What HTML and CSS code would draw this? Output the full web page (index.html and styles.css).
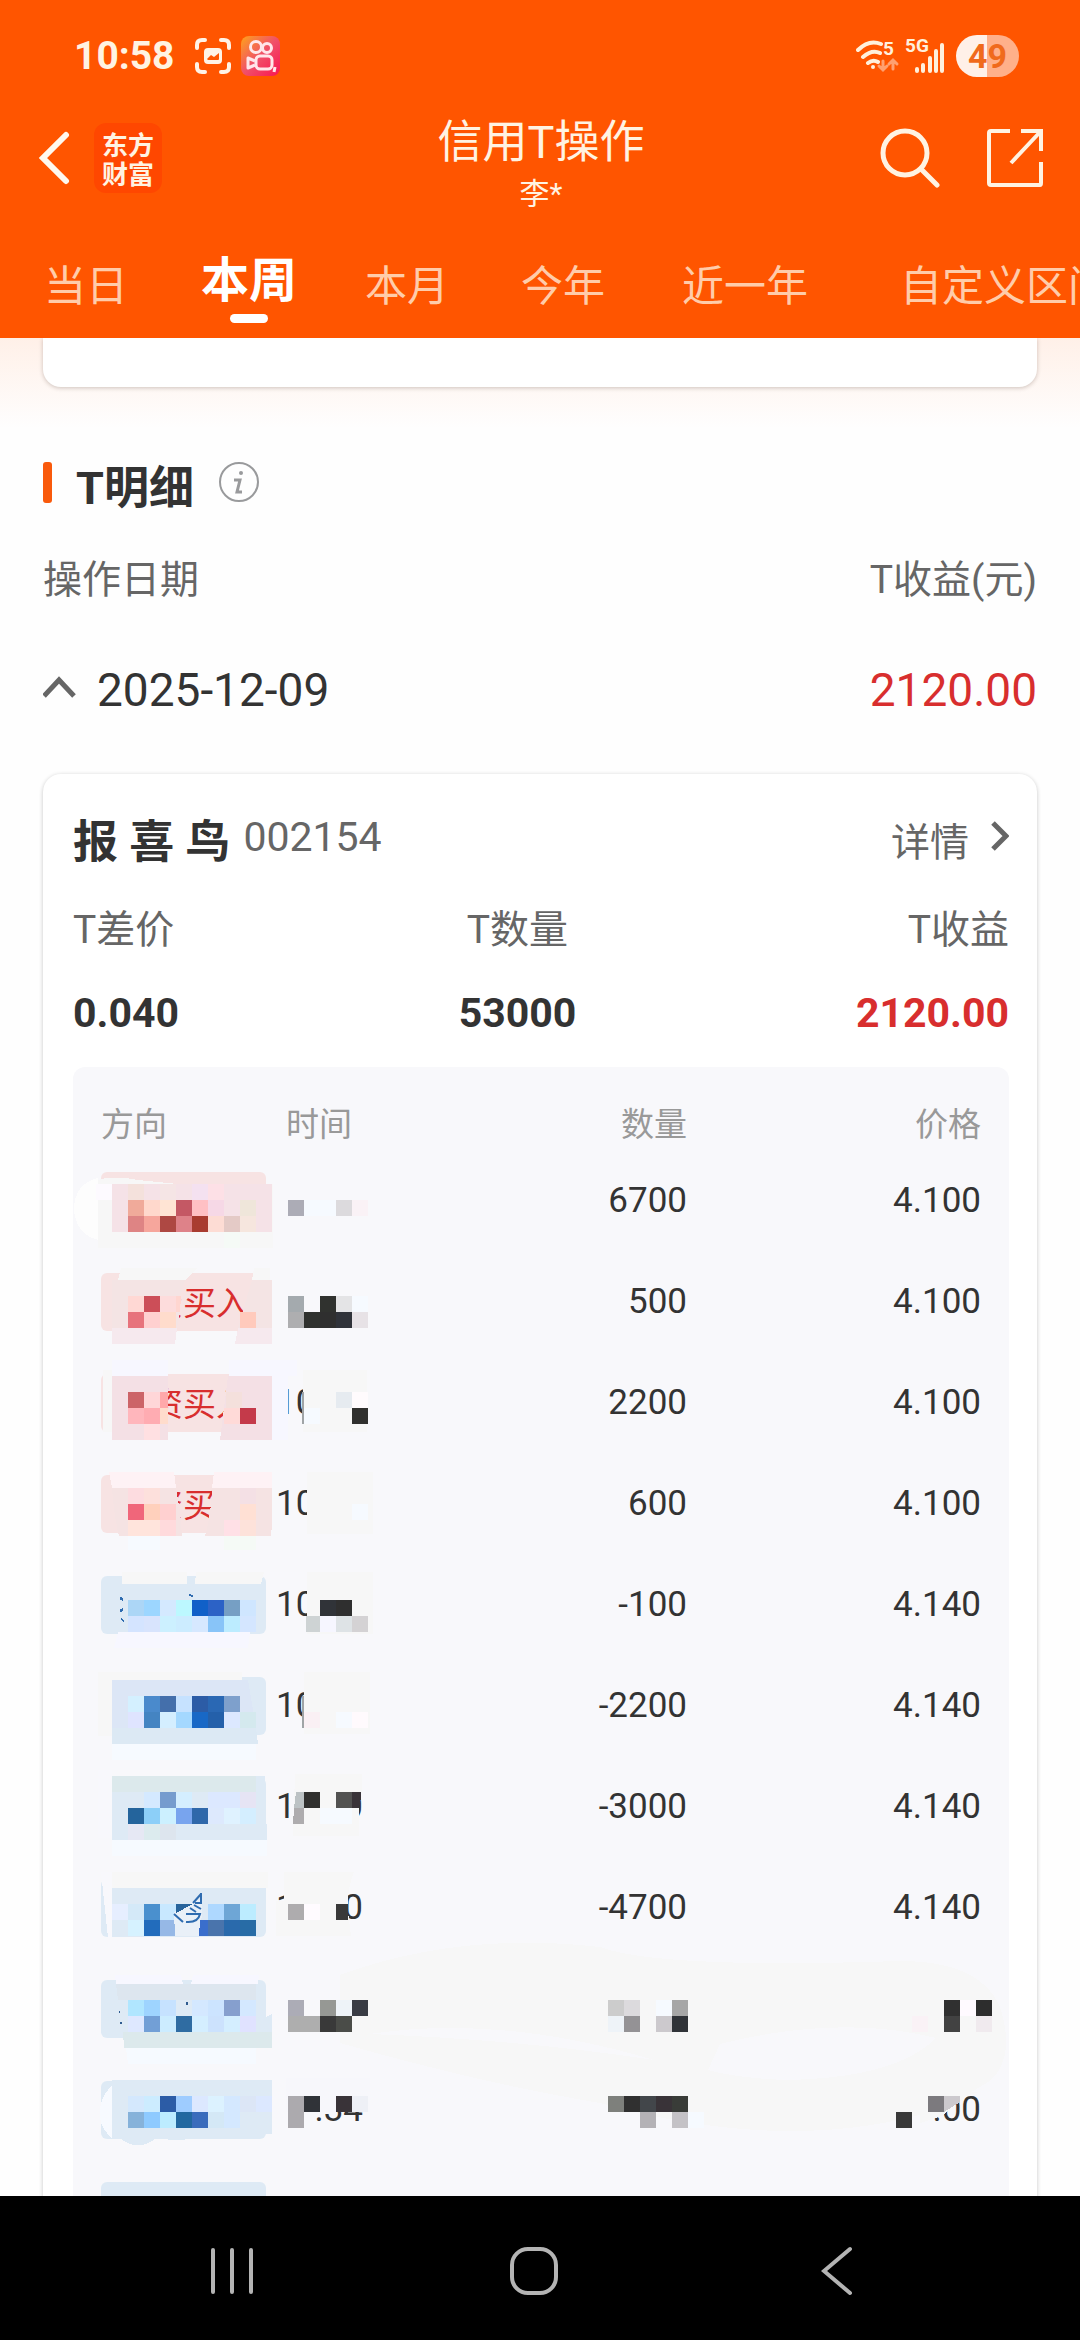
FILE: index.html
```html
<!DOCTYPE html>
<html lang="zh-CN">
<head>
<meta charset="utf-8">
<meta name="viewport" content="width=device-width, initial-scale=1">
<title>信用T操作</title>
<link rel="stylesheet" href="styles.css">
</head>
<body>
<header class="top">
  <div class="status">
    <div class="status-group">
      <span class="clock">10:58</span>
      <svg class="ico-shot" width="36" height="36" viewBox="0 0 36 36" fill="none" stroke="#fff3e6" stroke-width="4" stroke-linecap="round">
        <path d="M2 10V7q0-5 5-5h3M26 2h3q5 0 5 5v3M34 26v3q0 5-5 5h-3M10 34H7q-5 0-5-5v-3"/>
        <rect x="9" y="10" width="18" height="16" rx="4" fill="#fff3e6" stroke="none"/>
        <path d="M12 21l4-4 3 2 5-4v6q0 1-1 1H13z" fill="#ff5500" stroke="none"/>
      </svg>
      <svg width="39" height="40" viewBox="0 0 39 40" fill="none" stroke="#ffe6ea" stroke-width="3">
        <defs><linearGradient id="ks" x1="0" y1="0" x2="1" y2="1"><stop offset="0" stop-color="#ffa21a"/><stop offset=".5" stop-color="#f0506a"/><stop offset="1" stop-color="#fa1450"/></linearGradient></defs>
        <rect width="39" height="40" rx="8" fill="url(#ks)" stroke="none"/>
        <circle cx="15" cy="11" r="5.500"/><circle cx="26" cy="12" r="4.500"/>
        <rect x="15" y="20" width="16" height="13" rx="4"/>
        <path d="M14 25l-7-3v10l7-3" stroke-linejoin="round"/>
        <path d="M34 31l-1 5" stroke-width="3"/>
      </svg>
    </div>
    <div class="status-group status-right">
      <svg width="90" height="40" viewBox="856 36 90 40" fill="none" stroke="#fff0dc" stroke-width="4" stroke-linecap="round">
        <path d="M858 50q11-11 23-6M863 57q9-8 17-4M868 63q5-4 10-1" />
        <circle cx="873" cy="67" r="2" fill="#fff0dc" stroke="none"/>
        <path d="M883 61v9m-4-4l4 4 4-4M893 69v-9m-4 4l4-4 4 4" stroke="#ffa070" stroke-width="3"/>
        <path d="M917 69v2M923 65v6M930 58v13M936 51v20M942 45v26"/>
        <g class="status-label"><text x="883" y="55">5</text><text x="905" y="52">5G</text></g>
      </svg>
      <span class="battery">49</span>
    </div>
  </div>

  <div class="titlebar">
    <div class="title-side">
      <button class="icon-btn" aria-label="返回"><svg width="32" height="54" viewBox="0 0 32 54" fill="none" stroke="#fff8ee" stroke-width="6" stroke-linecap="round"><path d="M28 4L5 27l23 23"/></svg></button>
      <span class="logo">东方<br>财富</span>
    </div>
    <div class="title-text"><h1>信用T操作</h1><p>李*</p></div>
    <div class="title-side title-actions">
      <button class="icon-btn" aria-label="搜索"><svg width="60" height="60" viewBox="0 0 60 60" fill="none" stroke="#fff3e2" stroke-width="5" stroke-linecap="round"><circle cx="25" cy="25" r="22"/><path d="M42 42l15 15"/></svg></button>
      <button class="icon-btn" aria-label="分享"><svg width="58" height="60" viewBox="0 0 58 60" fill="none" stroke="#fff3e2" stroke-width="4"><path d="M24 3H5q-2 0-2 2v50q0 2 2 2h49q1 0 1-2V34M35 3h20v20M55 3L25 35"/></svg></button>
    </div>
  </div>

  <nav class="tabs">
    <button>当日</button>
    <button class="active">本周</button>
    <button>本月</button>
    <button>今年</button>
    <button>近一年</button>
    <button>自定义区间</button>
  </nav>
</header>

<main class="content">
  <div class="prev-card"></div>

  <div class="section-head">
    <span class="bar"></span>
    <h2>T明细</h2>
    <button class="icon-btn" aria-label="说明"><svg width="42" height="42" viewBox="0 0 42 42" fill="none" stroke="#999a9c" stroke-width="2"><circle cx="21" cy="21" r="19"/><circle cx="23" cy="12" r="2" fill="#999a9c" stroke="none"/><path d="M16 19h6l-3 12h5" stroke-width="3"/></svg></button>
  </div>

  <div class="line labels"><span>操作日期</span><span>T收益(元)</span></div>

  <div class="line day">
    <button class="day-toggle"><svg width="34" height="30" viewBox="0 0 34 30" fill="none" stroke="#666" stroke-width="5"><path d="M1 21L16 5l15 16"/></svg>2025-12-09</button>
    <span class="gain">2120.00</span>
  </div>

  <section class="card">
    <div class="card-head">
      <h3>报 喜 鸟</h3>
      <span class="code">002154</span>
      <a href="#detail" class="detail">详情<svg width="20" height="32" viewBox="0 0 20 32" fill="none" stroke="#666" stroke-width="5"><path d="M4 3l13 13L4 29"/></svg></a>
    </div>
    <dl class="totals">
      <div><dt>T差价</dt><dd>0.040</dd></div>
      <div class="mid"><dt>T数量</dt><dd>53000</dd></div>
      <div class="end"><dt>T收益</dt><dd class="gain">2120.00</dd></div>
    </dl>

    <div class="panel">
      <table>
        <colgroup><col class="c-side"><col class="c-time"><col><col></colgroup>
        <thead><tr><th class="side">方向</th><th class="time">时间</th><th>数量</th><th class="price">价格</th></tr></thead>
        <tbody>
          <tr><td class="side"><span class="tag buy"></span></td><td></td><td>6700</td><td class="price">4.100</td></tr>
          <tr><td class="side"><span class="tag buy">资买入</span></td><td></td><td>500</td><td class="price">4.100</td></tr>
          <tr><td class="side"><span class="tag buy">资买入</span></td><td class="time"><span>10</span></td><td>2200</td><td class="price">4.100</td></tr>
          <tr><td class="side"><span class="tag buy">资买入</span></td><td class="time"><span>10</span></td><td>600</td><td class="price">4.100</td></tr>
          <tr><td class="side"><span class="tag sell"></span></td><td class="time"><span>10</span></td><td>-100</td><td class="price">4.140</td></tr>
          <tr><td class="side"><span class="tag sell"></span></td><td class="time"><span>10</span></td><td>-2200</td><td class="price">4.140</td></tr>
          <tr><td class="side"><span class="tag sell"></span></td><td class="time"><span>1</span><span>0</span></td><td>-3000</td><td class="price">4.140</td></tr>
          <tr><td class="side"><span class="tag sell"></span></td><td class="time"><span>1</span><span>0</span></td><td>-4700</td><td class="price">4.140</td></tr>
          <tr><td class="side"><span class="tag sell"></span></td><td></td><td></td><td></td></tr>
          <tr><td class="side"><span class="tag sell"></span></td><td class="time"><span></span><span>.34</span></td><td></td><td class="price">.00</td></tr>
          <tr><td class="side"><span class="tag sell"></span></td><td></td><td></td><td></td></tr>
        </tbody>
      </table>

      <!-- privacy mosaic over quantity and price -->
      <svg class="mask mask-right" width="700" height="1129" viewBox="309 1067 700 1129" shape-rendering="crispEdges">
        <path fill="#f7f7f7" d="M340 1975q120-44 260-28 60 22 300 14 80 0 100 46 16 50-10 74l-44 26q-150 50-346-4-120-20-260-60z"/>
        <path fill="#f8f8fb" d="M370 2034q130-20 284 26-130-20-284-26zM720 2044q120-30 216-6-40 40-150 42-50-2-78-10z"/>
        <path fill="#f7f7f7" d="M920 2092h58l-12 4-24 20-22 7z"/>
        <path fill="#ccc9cd" d="M944 2096h16v6l-16 10z"/>
        <g class="px">
          <rect x="608" y="2000" fill="#cccccc"/><rect x="624" y="2000" fill="#dcdadd"/><rect x="656" y="2000" fill="#f6faff"/><rect x="672" y="2000" fill="#a6a6a6"/>
          <rect x="608" y="2016" fill="#eef3f8"/><rect x="624" y="2016" fill="#949295"/><rect x="656" y="2016" fill="#ccc9cd"/><rect x="672" y="2016" fill="#303338"/>
          <rect x="944" y="2000" fill="#303030"/><rect x="960" y="2000" fill="#fffaff"/><rect x="976" y="2000" fill="#2d2d2d"/>
          <rect x="912" y="2016" fill="#faf2f6"/><rect x="944" y="2016" fill="#424242"/><rect x="976" y="2016" fill="#f0eaee"/>
          <rect x="608" y="2096" fill="#7e807c"/><rect x="624" y="2096" fill="#303030"/><rect x="640" y="2096" fill="#42464a"/><rect x="656" y="2096" fill="#393338"/><rect x="672" y="2096" fill="#393c38"/>
          <rect x="640" y="2112" fill="#b4b2b6"/><rect x="672" y="2112" fill="#c4c2c6"/><rect x="688" y="2112" fill="#f6faff"/>
          <rect x="928" y="2096" fill="#7c7a7e"/><rect x="896" y="2112" fill="#393939"/>
        </g>
      </svg>

      <!-- privacy mosaic over direction and time -->
      <svg class="mask mask-left" width="336" height="1129" viewBox="73 1067 336 1129" shape-rendering="crispEdges">
        <!-- row 1 -->
        <path fill="#f7f7f7" d="M98 1180q14-5 40 0l40 4h95v64h-175z"/>
        <path fill="#fdfdfd" d="M98 1178q-24 6-24 32 2 24 24 30z"/>
        <path fill="#f5e2e7" d="M112 1184h160v48H112z"/>
        <path fill="#f6faff" d="M304 1200h32v16h-32z"/>
        <g class="px">
          <rect x="96" y="1184" fill="#fdfaff"/><rect x="128" y="1184" fill="#f4e1dc"/><rect x="160" y="1184" fill="#f5e5e5"/><rect x="192" y="1184" fill="#f4e1f0"/><rect x="208" y="1184" fill="#fde0e6"/>
          <rect x="128" y="1200" fill="#f0aa9a"/><rect x="144" y="1200" fill="#ffd8cc"/><rect x="160" y="1200" fill="#ffe4d4"/><rect x="176" y="1200" fill="#c45864"/><rect x="192" y="1200" fill="#ffc0c4"/><rect x="208" y="1200" fill="#f6d8e6"/><rect x="240" y="1200" fill="#efe6da"/>
          <rect x="288" y="1200" fill="#acacb6"/><rect x="336" y="1200" fill="#dcdadd"/><rect x="352" y="1200" fill="#faf2f6"/>
          <rect x="128" y="1216" fill="#de8484"/><rect x="144" y="1216" fill="#f6a69c"/><rect x="160" y="1216" fill="#ae4843"/><rect x="176" y="1216" fill="#de8289"/><rect x="192" y="1216" fill="#a93c30"/><rect x="208" y="1216" fill="#fddcd4"/><rect x="224" y="1216" fill="#e4cac6"/><rect x="240" y="1216" fill="#f6e6de"/>
          <rect x="224" y="1232" fill="#f5faf6"/>
        </g>
        <!-- row 2 -->
        <path fill="#f7f7f7" d="M121 1268h76l-11 12h-68zM254 1268h16v12h-18z"/>
        <path fill="#f4e4e4" d="M112 1280h74q-6 8-6 32l-3 16h-65zM252 1280h20v48h-34z"/>
        <path fill="#f6e9ee" d="M112 1328h65l-2 16h-63zM238 1328h34v16h-37z"/>
        <path fill="#ffd6d0" d="M176 1296h5l-1 16h-4z"/>
        <g class="px">
          <rect x="128" y="1296" fill="#ffd8d4"/><rect x="144" y="1296" fill="#cc4e58"/><rect x="160" y="1296" fill="#fddcdc"/>
          <rect x="128" y="1312" fill="#e7737c"/><rect x="144" y="1312" fill="#ffd0d0"/><rect x="160" y="1312" fill="#ffdccc"/><rect x="240" y="1312" fill="#ffcabc"/>
          <rect x="288" y="1296" fill="#a4aaae"/><rect x="320" y="1296" fill="#30322f"/><rect x="336" y="1296" fill="#e4e4e6"/><rect x="352" y="1296" fill="#f6faff"/>
          <rect x="288" y="1312" fill="#aeaeb0"/><rect x="304" y="1312" fill="#30322f"/><rect x="320" y="1312" fill="#2f2f2f"/><rect x="336" y="1312" fill="#30333a"/><rect x="352" y="1312" fill="#e7e2e6"/>
        </g>
        <!-- row 3 -->
        <path fill="#f7f7f7" d="M103 1370h9v62h-9z"/>
        <path fill="#f7f7ff" d="M112 1360h56v16h-56zM229 1360h68v16h-68zM272 1376h16v64h-16z"/>
        <path fill="#f4e0e5" d="M112 1376h56v64h-56zM228 1376h44v64h-52z"/>
        <path fill="#f7f7f7" d="M303 1370h64v62h-64z"/>
        <path fill="#a0a4a6" d="M302 1392h2v32h-2z"/>
        <path fill="#ffa8aa" d="M160 1392h8v16h-8z"/><path fill="#ffdccc" d="M160 1408h8v16h-8z"/>
        <g class="px">
          <rect x="128" y="1392" fill="#cc6468"/><rect x="144" y="1392" fill="#ffd6d8"/><rect x="226" y="1392" fill="#f4e0dc"/>
          <rect x="128" y="1408" fill="#ffb6bc"/><rect x="144" y="1408" fill="#ffacb2"/><rect x="224" y="1408" fill="#ffdad8"/><rect x="240" y="1408" fill="#c43a4a"/>
          <rect x="144" y="1424" fill="#ffe0e2"/>
          <rect x="336" y="1392" fill="#e6ebf0"/><rect x="352" y="1392" fill="#fffbfd"/><rect x="304" y="1408" fill="#f6faff"/><rect x="352" y="1408" fill="#30302e"/>
        </g>
        <!-- row 4 -->
        <path fill="#fef2f5" d="M109 1472h65l2 16h-64zM214 1472h58v16h-60z"/>
        <path fill="#f5e3e3" d="M112 1488h64l4 24 2 24h-63q-5-20-7-48zM212 1488h60v36l-1 12h-66q6-20 7-48z"/>
        <path fill="#f6faff" d="M128 1536h32v14h-32z"/><path fill="#f5faf6" d="M224 1536h32v14h-32z"/>
        <path fill="#f7f7f7" d="M307 1472h66v62h-66z"/>
        <g class="px">
          <rect x="128" y="1488" fill="#fddce0"/><rect x="144" y="1488" fill="#fde0dc"/><rect x="240" y="1488" fill="#f4e0e5"/>
          <rect x="128" y="1504" fill="#f0667a"/><rect x="144" y="1504" fill="#ffd0bc"/><rect x="160" y="1504" fill="#ffd0d0"/><rect x="240" y="1504" fill="#ffe0d4"/>
          <rect x="128" y="1520" fill="#ffe4dc"/><rect x="144" y="1520" fill="#ffe4dc"/><rect x="160" y="1520" fill="#ffdadc"/><rect x="224" y="1520" fill="#ffe0e6"/><rect x="240" y="1520" fill="#fde2da"/>
          <rect x="352" y="1504" fill="#f6faff"/>
        </g>
        <!-- row 5 -->
        <path fill="#f7f7f7" d="M122 1572h65v12h-65zM196 1572h68l-3 12h-66zM307 1572h66v62h-66z"/>
        <path fill="#f7f7ff" d="M118 1632h132l-2 16H114z"/>
        <path fill="#2f6cb0" d="M120 1597l3 1v3l-3-1zM120 1609l3-1v3l-3 1zM121 1618l3 2v2l-3-2zM189 1594l4 1v2l-4-1z"/>
        <g class="px">
          <rect x="128" y="1600" fill="#acd6f6"/><rect x="144" y="1600" fill="#9cd6ff"/><rect x="160" y="1600" fill="#d4e9ff"/><rect x="176" y="1600" fill="#bcf8ff"/><rect x="192" y="1600" fill="#1060c8"/><rect x="208" y="1600" fill="#2c62c6"/><rect x="224" y="1600" fill="#769fc4"/><rect x="240" y="1600" fill="#cfe6ff"/>
          <rect x="128" y="1616" fill="#d4e4ff"/><rect x="144" y="1616" fill="#d8e4fd"/><rect x="160" y="1616" fill="#ccf0ff"/><rect x="176" y="1616" fill="#ccecff"/><rect x="192" y="1616" fill="#d6e8ff"/><rect x="208" y="1616" fill="#88c4f8"/><rect x="224" y="1616" fill="#bcecff"/><rect x="240" y="1616" fill="#d4e6ff"/>
          <rect x="320" y="1600" fill="#303338"/><rect x="336" y="1600" fill="#2f2f2f"/>
          <rect x="306" y="1616" fill="#ced3d4"/><rect x="320" y="1616" fill="#f6f6ff"/><rect x="336" y="1616" fill="#dee3e6"/><rect x="352" y="1616" fill="#d4d2d4"/>
        </g>
        <!-- row 6 -->
        <path fill="#f7f7f7" d="M98 1672h144v8H112v56H98zM304 1672h66v62h-66z"/>
        <path fill="#dce6f6" d="M112 1680h136l8 48H112z"/>
        <path fill="#dce9f4" d="M112 1728h144l2 16H112z"/>
        <path fill="#f6faff" d="M112 1744h144v16H112z"/>
        <path fill="#a0a4a6" d="M302 1696h2v32h-2z"/>
        <g class="px">
          <rect x="128" y="1696" fill="#d4f0ff"/><rect x="144" y="1696" fill="#4a8acc"/><rect x="160" y="1696" fill="#446fab"/><rect x="176" y="1696" fill="#c6e2ff"/><rect x="192" y="1696" fill="#2c5ca6"/><rect x="208" y="1696" fill="#2a68b4"/><rect x="224" y="1696" fill="#7ea0cc"/>
          <rect x="128" y="1712" fill="#dfe4ff"/><rect x="144" y="1712" fill="#4484c2"/><rect x="160" y="1712" fill="#d4eeff"/><rect x="176" y="1712" fill="#a4d8ff"/><rect x="192" y="1712" fill="#1868c6"/><rect x="208" y="1712" fill="#2460aa"/><rect x="224" y="1712" fill="#dce8ff"/><rect x="240" y="1712" fill="#d4e9ee"/>
          <rect x="304" y="1712" fill="#faf0f4"/><rect x="336" y="1712" fill="#f6faff"/><rect x="352" y="1712" fill="#fffafd"/>
        </g>
        <!-- row 7 -->
        <path fill="#f8f8fc" d="M98 1770h14v68H98z"/>
        <path fill="#deeaf5" d="M112 1776h153l2 64H112z"/>
        <path fill="#dce9ec" d="M112 1776h144v16H112z"/>
        <path fill="#f6faff" d="M112 1840h155v16H112z"/>
        <path fill="#f7f7f7" d="M295 1774h67v18l-3 4v40h-66z"/>
        <path fill="#bcc2c4" d="M296 1792h8v16h-10z"/><path fill="#aeacae" d="M294 1808h10v16h-11z"/>
        <path fill="#393338" d="M352 1792h9v6l-2 10h-7z"/>
        <g class="px">
          <rect x="144" y="1792" fill="#d4e9ff"/><rect x="160" y="1792" fill="#769cce"/><rect x="176" y="1792" fill="#d4eeff"/><rect x="208" y="1792" fill="#dce8ff"/><rect x="224" y="1792" fill="#dce8ff"/><rect x="240" y="1792" fill="#e6e4f4"/>
          <rect x="128" y="1808" fill="#24649c"/><rect x="144" y="1808" fill="#8ccff8"/><rect x="160" y="1808" fill="#ccf0ff"/><rect x="176" y="1808" fill="#78a4ee"/><rect x="192" y="1808" fill="#2f68aa"/><rect x="208" y="1808" fill="#dde9fd"/><rect x="224" y="1808" fill="#dff2ff"/><rect x="240" y="1808" fill="#d4eeff"/>
          <rect x="128" y="1824" fill="#e6e8f4"/><rect x="144" y="1824" fill="#dcebee"/><rect x="160" y="1824" fill="#dde5ee"/>
          <rect x="304" y="1792" fill="#30302e"/><rect x="336" y="1792" fill="#525251"/><rect x="320" y="1808" fill="#f6faff"/><rect x="336" y="1808" fill="#f6faff"/>
        </g>
        <!-- row 8 -->
        <path fill="#f7f7f7" d="M112 1872h156v16H112zM284 1872h70q-8 20-6 40l3 24h-75v-35h8z"/>
        <path fill="#f8f8fc" d="M101 1872h11v66h-4z"/>
        <path fill="#deeaf5" d="M112 1888h154v38l-2 10H112z"/>
        <g class="px">
          <rect x="112" y="1904" fill="#e6eeff"/><rect x="128" y="1904" fill="#d4e9f8"/><rect x="144" y="1904" fill="#4a90ce"/><rect x="160" y="1904" fill="#c8e8ff"/><rect x="208" y="1904" fill="#aed8ff"/><rect x="224" y="1904" fill="#6ea6d6"/><rect x="240" y="1904" fill="#bcecff"/>
          <rect x="128" y="1920" fill="#d6f2ff"/><rect x="144" y="1920" fill="#226cbc"/><rect x="160" y="1920" fill="#96b8e6"/><rect x="208" y="1920" fill="#4a74ac"/><rect x="224" y="1920" fill="#2a6aac"/><rect x="240" y="1920" fill="#286ca6"/>
          <rect x="288" y="1904" fill="#aeacae"/><rect x="304" y="1904" fill="#fffbff"/>
        </g>
        <path fill="#e9f0f8" d="M174 1912l22-12h6l-1 36h-26z"/>
        <path fill="#28649c" d="M176 1904h17l-17 9z"/><path fill="#3a6ecc" d="M200 1920h8v16h-9z"/><path fill="#393939" d="M336 1904h12v16h-12z"/>
        <path fill="none" stroke="#2f6cb0" stroke-width="2" shape-rendering="auto" d="M201 1893v10h-6M201 1894l-8 9M190 1908l6 4M194 1905l7 4M186 1914h14q-2 9-14 8M174 1914l9 8"/>
        <!-- row 9 -->
        <path fill="#f7f7ff" d="M115 1975h66l2 9h-67zM193 1975h66l-1 9h-67z"/>
        <path fill="#dde6ef" d="M116 1984h140v16H118z"/>
        <path fill="#deeaf5" d="M260 2020l12-6v18h-16z"/>
        <path fill="#dce9ec" d="M123 2032h149v16H124z"/>
        <path fill="#f6faff" d="M126 2048h130v16H128z"/>
        <path fill="#2f5c90" d="M186 2002h2v3h-2zM119 2011h1v2h-1zM120 2022h2v2h-2z"/>
        <g class="px">
          <rect x="128" y="2000" fill="#b0e6ff"/><rect x="144" y="2000" fill="#9ed4ff"/><rect x="160" y="2000" fill="#c6e2ff"/><rect x="192" y="2000" fill="#d4e8ff"/><rect x="208" y="2000" fill="#cce4ff"/><rect x="224" y="2000" fill="#869fce"/><rect x="240" y="2000" fill="#d4e8ff"/>
          <rect x="128" y="2016" fill="#dee8ff"/><rect x="144" y="2016" fill="#729fd6"/><rect x="160" y="2016" fill="#ccecff"/><rect x="176" y="2016" fill="#2f6ca2"/><rect x="192" y="2016" fill="#d4eeff"/><rect x="208" y="2016" fill="#cce2fd"/><rect x="224" y="2016" fill="#d4eeff"/><rect x="240" y="2016" fill="#e0e2ff"/>
          <rect x="288" y="2000" fill="#acacb6"/><rect x="320" y="2000" fill="#969894"/><rect x="336" y="2000" fill="#eef3f8"/><rect x="352" y="2000" fill="#393c44"/>
          <rect x="288" y="2016" fill="#aeaeae"/><rect x="304" y="2016" fill="#aeaeae"/><rect x="320" y="2016" fill="#393939"/><rect x="336" y="2016" fill="#4a4c48"/>
        </g>
        <!-- row 10 -->
        <path fill="#f7faff" d="M112 2086q-14 12-12 32 2 12 12 20z"/>
        <path fill="#deeaf5" d="M112 2080h160v54q-40 3-96 6-12 0-18-3-20 16-38 1l-8-5z"/>
        <path fill="#f7f7fb" d="M286 2078h84v34h-84z"/>
        <g class="px">
          <rect x="128" y="2096" fill="#d4e8fd"/><rect x="144" y="2096" fill="#ccecff"/><rect x="160" y="2096" fill="#2c5ca6"/><rect x="176" y="2096" fill="#9eccff"/><rect x="192" y="2096" fill="#dce8ff"/><rect x="208" y="2096" fill="#dcf2ff"/><rect x="224" y="2096" fill="#d4e8ff"/><rect x="240" y="2096" fill="#dce6f6"/><rect x="256" y="2096" fill="#dce8ff"/>
          <rect x="128" y="2112" fill="#86b2da"/><rect x="144" y="2112" fill="#8ecaff"/><rect x="160" y="2112" fill="#bcecff"/><rect x="176" y="2112" fill="#2268a0"/><rect x="192" y="2112" fill="#3a6cbc"/><rect x="208" y="2112" fill="#d4e8f6"/><rect x="224" y="2112" fill="#d4e8ff"/>
          <rect x="288" y="2096" fill="#acaaae"/><rect x="288" y="2112" fill="#acaaae"/><rect x="304" y="2096" fill="#303338"/><rect x="336" y="2096" fill="#393338"/><rect x="352" y="2096" fill="#eef0f6"/>
        </g>
      </svg>
    </div>
  </section>
</main>

<footer class="sysnav">
  <button class="icon-btn" aria-label="最近任务"><svg width="48" height="50" viewBox="0 0 48 50" fill="none" stroke="#b4b4b4" stroke-width="4" stroke-linecap="round"><path d="M5 4v42M24 4v42M43 4v42"/></svg></button>
  <button class="icon-btn" aria-label="主页"><svg width="48" height="50" viewBox="0 0 48 50" fill="none" stroke="#b4b4b4" stroke-width="4"><rect x="2" y="3" width="44" height="44" rx="16"/></svg></button>
  <button class="icon-btn" aria-label="返回"><svg width="32" height="50" viewBox="0 0 32 50" fill="none" stroke="#b4b4b4" stroke-width="4" stroke-linecap="round"><path d="M29 3L3 25l26 22"/></svg></button>
</footer>
</body>
</html>
```
FILE: styles.css
```css
* { box-sizing: border-box; margin: 0; padding: 0; }

body {
  height: 100vh;
  display: flex;
  flex-direction: column;
  overflow: hidden;
  background: #fefefe;
  color: #333;
  font-family: Roboto, "Noto Sans CJK SC", sans-serif;
}

button {
  border: 0;
  background: none;
  color: inherit;
  font: inherit;
}

svg { display: block; }
.icon-btn { display: block; }

/* header */
.top { flex: none; background: #ff5500; color: #fff3e2; }

.status {
  height: 106px;
  padding: 6px 61px 0 74px;
  display: flex;
  align-items: center;
  justify-content: space-between;
}
.status-group { display: flex; align-items: center; gap: 10px; }
.clock { margin-right: 10px; font-size: 39px; font-weight: 700; line-height: 48px; }
.status-label { fill: #fff0dc; stroke: none; font-size: 19px; font-weight: 700; }
.battery {
  width: 63px;
  border-radius: 21px;
  background: linear-gradient(90deg, #fff0e8 50%, #ffb08a 50%);
  color: #f06a1c;
  font-size: 34px;
  font-weight: 700;
  line-height: 42px;
  text-align: center;
}

.titlebar {
  height: 104px;
  padding: 0 36px 0 38px;
  display: grid;
  grid-template-columns: 1fr auto 1fr;
  grid-template-rows: 104px;
}
.title-side { display: flex; align-items: center; gap: 24px; }
.title-actions { justify-content: flex-end; gap: 46px; }
.logo {
  width: 68px;
  height: 70px;
  padding-top: 6px;
  border-radius: 12px;
  background: #ff4700;
  font-family: "Noto Sans CJK SC", sans-serif;
  font-size: 26px;
  font-weight: 700;
  line-height: 29px;
  text-align: center;
}
.title-text { padding-top: 10px; text-align: center; }
.title-text h1 { font-size: 45px; font-weight: 400; line-height: 54px; }
.title-text p { font-size: 30px; line-height: 48px; }

.tabs {
  height: 128px;
  padding-left: 44px;
  display: grid;
  grid-template-columns: 157px 164px 156px 161px 218px auto;
  align-items: start;
  justify-items: start;
  overflow: hidden;
  color: #ffccaa;
  font-size: 42px;
  line-height: 64px;
  white-space: nowrap;
}
.tabs button { height: 128px; padding-top: 26px; }
.tabs .active {
  position: relative;
  padding-top: 14px;
  color: #fff;
  font-size: 48px;
  font-weight: 700;
}
.tabs .active::after {
  content: "";
  position: absolute;
  bottom: 15px;
  left: 50%;
  width: 38px;
  height: 9px;
  margin-left: -19px;
  border-radius: 5px;
  background: #fff;
}

/* page body */
.content {
  flex: 1;
  min-height: 0;
  overflow: hidden;
  padding: 0 43px;
  background: linear-gradient(#fff0e8, #fefefe 90px);
}
.prev-card {
  height: 49px;
  border-radius: 0 0 18px 18px;
  background: #fff;
  box-shadow: 0 1px 4px rgba(60, 30, 20, .25);
}

.section-head {
  height: 64px;
  margin-top: 63px;
  display: flex;
  align-items: center;
  gap: 24px;
}
.section-head .bar { width: 9px; height: 41px; border-radius: 3px; background: #f95a0c; }
.section-head h2 { padding-top: 14px; font-size: 45px; font-weight: 700; line-height: 52px; }

.line { display: flex; align-items: center; justify-content: space-between; }
.labels { margin-top: 36px; color: #666; font-size: 39px; line-height: 60px; }
.day { margin-top: 40px; font-size: 46px; line-height: 80px; }
.day-toggle { display: flex; align-items: center; gap: 20px; }
.gain { color: #d82e2e; }

.card {
  margin-top: 44px;
  padding: 35px 28px 0 30px;
  border-radius: 18px;
  background: #fff;
  box-shadow: 0 1px 4px rgba(0, 0, 0, .22);
}
.card-head { height: 68px; display: flex; align-items: center; }
.card-head h3 { font-size: 45px; font-weight: 700; line-height: 68px; }
.code { padding: 0 0 12px 13px; color: #666; font-size: 41px; line-height: 56px; }
.detail {
  margin-left: auto;
  display: flex;
  align-items: center;
  gap: 20px;
  color: #666;
  font-size: 39px;
  line-height: 68px;
  text-decoration: none;
}
.detail svg { margin-bottom: 14px; }

.totals { margin-top: 23px; display: flex; justify-content: space-between; }
.totals dt { color: #666; font-size: 39px; line-height: 60px; }
.totals dd { margin-top: 23px; font-size: 41px; font-weight: 700; line-height: 60px; }
.totals .gain { color: #d82e2e; }
.mid { text-align: center; }
.end { text-align: right; }

/* trades */
.panel {
  position: relative;
  margin-top: 24px;
  border-radius: 12px;
  background: #f8f8fb;
}
table { width: 100%; border-collapse: collapse; table-layout: fixed; }
.c-side { width: 200px; }
.c-time { width: 92px; }
th {
  height: 83px;
  padding-top: 27px;
  color: #999;
  font-size: 33px;
  font-weight: 400;
  text-align: right;
}
td { height: 101px; font-size: 35px; text-align: right; }
th.side, td.side { padding-left: 28px; text-align: left; }
th.price, td.price { padding-right: 28px; }
th.time { text-align: center; }
td.time { padding: 0 2px 0 3px; text-align: left; }
td.time span + span { float: right; }
.tag {
  display: block;
  width: 165px;
  height: 58px;
  padding-right: 17px;
  border-radius: 6px;
  font-size: 33px;
  line-height: 62px;
  text-align: right;
}
.buy { background: #f7e3e3; color: #d82e2e; }
.sell { background: #deeaf5; color: #2f6cb0; }

.mask { position: absolute; top: 0; }
.mask-left { left: 0; }
.mask-right { right: 0; }
.px rect { width: 16px; height: 16px; }

/* system navigation */
.sysnav {
  flex: none;
  height: 144px;
  padding: 6px 92px 0 81px;
  display: grid;
  grid-template-columns: repeat(3, 1fr);
  align-items: center;
  justify-items: center;
  background: #000;
}
```
